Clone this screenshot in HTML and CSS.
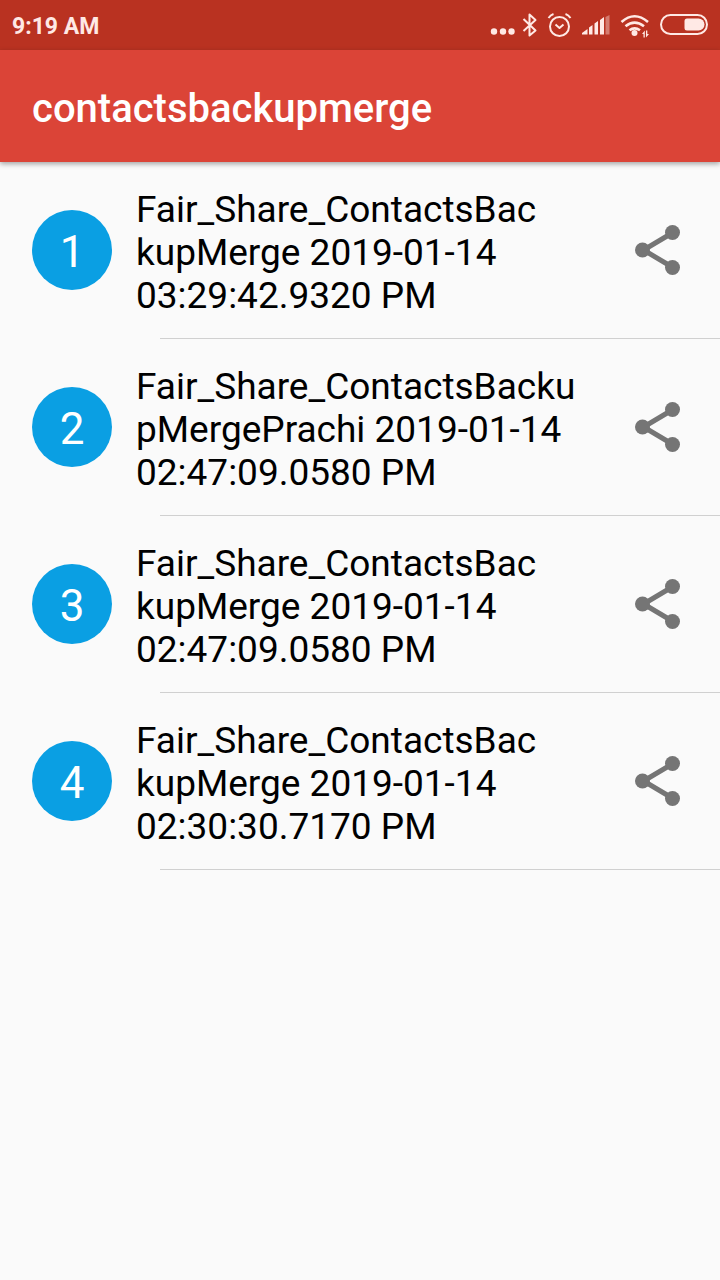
FILE: index.html
```html
<!DOCTYPE html>
<html lang="en">
<head>
<meta charset="utf-8">
<meta name="viewport" content="width=device-width, initial-scale=1">
<title>contactsbackupmerge</title>
<link rel="stylesheet" href="styles.css">
</head>
<body>
<svg class="sprite" aria-hidden="true">
  <symbol id="share" viewBox="0 0 48 52">
    <path d="M40 8.500 10.500 26 40 43.500" fill="none" stroke="currentColor" stroke-width="5"/>
    <circle cx="39.500" cy="8.500" r="7.500" fill="currentColor"/>
    <circle cx="9.500" cy="26" r="7.500" fill="currentColor"/>
    <circle cx="39.500" cy="43.500" r="7.500" fill="currentColor"/>
  </symbol>
</svg>
<div class="status">
  <span class="time">9:19 AM</span>
  <svg class="indicators" width="220" height="50" viewBox="490 0 220 50" role="img" aria-label="Bluetooth, alarm, signal, Wi-Fi, battery">
    <g fill="currentColor">
      <circle cx="494" cy="31.500" r="3.200"/><circle cx="503" cy="31.500" r="3.200"/><circle cx="511.500" cy="31.500" r="3.200"/>
      <path d="M582 34.500v-1.500l5.500-4v5.500zM589 34.500v-7l3.500-2.500v9.500zM594.500 34.500V23.500l3.500-2.500v13.500zM600 34.500V20l4-3v17.500z"/>
      <path d="M605.500 34.500V17l4-2v19.500z" opacity=".4"/>
      <circle cx="634.500" cy="33" r="3"/>
      <path d="M642 34l2.800-3.500v7h-1.300V34zM646 30.500h1.300V34h1.700L646 37.500z"/>
      <path d="M687 18.500h11.500a6 6 0 0 1 0 12H687a2.500 2.500 0 0 1-2.500-2.500v-7a2.500 2.500 0 0 1 2.500-2.500z"/>
    </g>
    <g fill="none" stroke="currentColor" stroke-width="2" stroke-linejoin="round">
      <path d="M523.500 19 535.500 30.500 529.500 35.500V14.500L535.500 20 523.500 31"/>
      <circle cx="559.500" cy="26.500" r="9.500"/>
      <path d="m555.500 24.500 4 3.500 4-3.500M548.500 18q2-3 5-4M570.500 18q-2-3-5-4"/>
      <rect x="661" y="15" width="46" height="19" rx="9.500"/>
    </g>
    <g fill="none" stroke="currentColor" stroke-width="2.600">
      <path d="M621.500 22q13-11.500 26.500 0M625.500 26.300q9-7.500 18.500 0M629.500 30.300q5-4 10.500 0"/>
    </g>
  </svg>
</div>
<header class="appbar"><h1 class="title">contactsbackupmerge</h1></header>
<main>
  <ul class="list">
    <li class="row">
      <span class="badge">1</span>
      <p class="name">Fair_Share_ContactsBac<br>kupMerge 2019-01-14<br>03:29:42.9320 PM</p>
      <button class="share" type="button" aria-label="Share backup 1"><svg class="icon"><use href="#share"/></svg></button>
    </li>
    <li class="row">
      <span class="badge">2</span>
      <p class="name">Fair_Share_ContactsBacku<br>pMergePrachi 2019-01-14<br>02:47:09.0580 PM</p>
      <button class="share" type="button" aria-label="Share backup 2"><svg class="icon"><use href="#share"/></svg></button>
    </li>
    <li class="row">
      <span class="badge">3</span>
      <p class="name">Fair_Share_ContactsBac<br>kupMerge 2019-01-14<br>02:47:09.0580 PM</p>
      <button class="share" type="button" aria-label="Share backup 3"><svg class="icon"><use href="#share"/></svg></button>
    </li>
    <li class="row">
      <span class="badge">4</span>
      <p class="name">Fair_Share_ContactsBac<br>kupMerge 2019-01-14<br>02:30:30.7170 PM</p>
      <button class="share" type="button" aria-label="Share backup 4"><svg class="icon"><use href="#share"/></svg></button>
    </li>
  </ul>
</main>
</body>
</html>
```
FILE: styles.css
```css
* { box-sizing: border-box; }
body {
  margin: 0;
  background: #fafafa;
  color: #000;
  font-family: Roboto, sans-serif;
}
.sprite { display: none; }
.status {
  display: flex;
  align-items: center;
  justify-content: space-between;
  height: 50px;
  padding: 0 10px 0 12px;
  background: #b93221;
  color: #ffe9e5;
}
.time {
  font-size: 23px;
  font-weight: 700;
  line-height: 28px;
  padding-top: 4px;
}
.indicators { display: block; }
.appbar {
  display: flex;
  align-items: center;
  height: 112px;
  padding: 6px 32px 0;
  background: #db4437;
  box-shadow: 0 2px 5px rgba(0, 0, 0, 0.35);
}
.title {
  margin: 0;
  color: #fff;
  font-size: 40px;
  font-weight: 500;
  line-height: 48px;
}
.list {
  margin: 0;
  padding: 0;
  list-style: none;
}
.row {
  display: flex;
  align-items: center;
  gap: 24px;
  padding: 21px 36px 22px 32px;
  background: linear-gradient(#d0d0d0, #d0d0d0) 160px 100% / 100% 1px no-repeat;
}
.badge {
  display: flex;
  flex: none;
  align-items: center;
  justify-content: center;
  width: 80px;
  height: 80px;
  padding-top: 4px;
  border-radius: 50%;
  background: #0a9fe3;
  color: #fff;
  font-size: 44px;
  line-height: 52px;
}
.name {
  flex: 1;
  margin: 0;
  padding-top: 5px;
  font-size: 37px;
  line-height: 43px;
}
.share {
  flex: none;
  padding: 0;
  border: 0;
  background: none;
  color: #757575;
}
.icon {
  display: block;
  width: 54px;
  height: 52px;
}
```
